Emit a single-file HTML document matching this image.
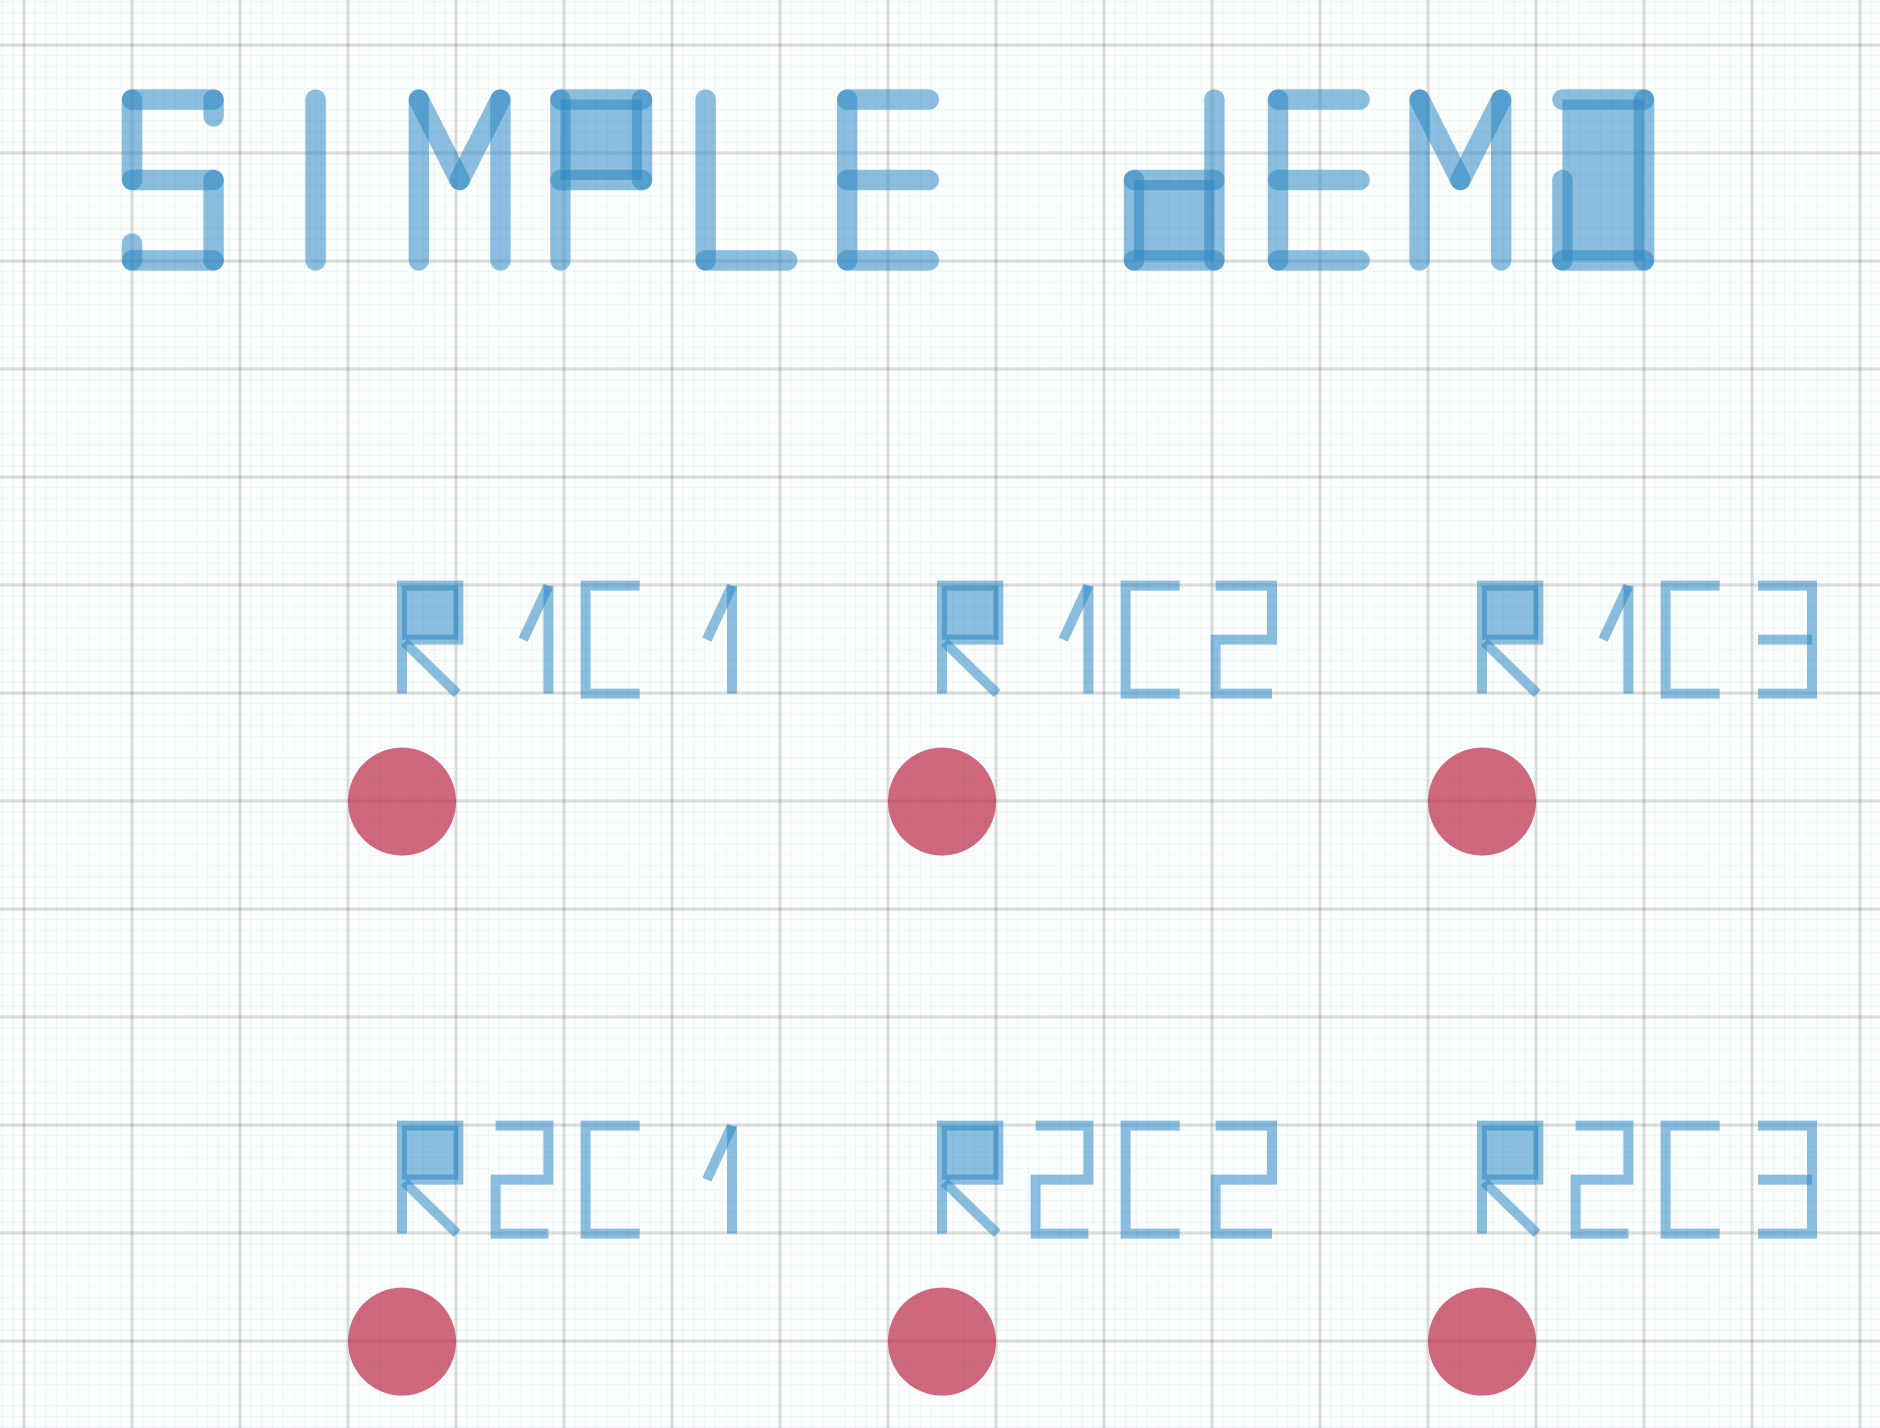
<!DOCTYPE html>
<html><head><meta charset="utf-8"><style>
html,body{margin:0;padding:0;background:#fcfefe;width:1880px;height:1428px;overflow:hidden}
.sr{position:absolute;left:-9999px;font-family:"Liberation Sans",sans-serif}
svg{display:block}
.t line,.t polyline{stroke:rgb(43,134,194);stroke-opacity:.55;stroke-width:17;stroke-linecap:round;fill:none}
.t rect{fill:rgb(43,134,194);fill-opacity:.55}
.s line,.s polyline{stroke:rgb(43,134,194);stroke-opacity:.55;stroke-width:8.3;fill:none;stroke-linejoin:miter}
.s rect{fill:rgb(43,134,194);fill-opacity:.55}
.d circle{fill:rgb(185,40,70);fill-opacity:.7}
</style></head><body>
<h1 class="sr">SIMPLE DEMO R1C1 R1C2 R1C3 R2C1 R2C2 R2C3</h1>
<svg width="1880" height="1428" viewBox="0 0 1566.67 1190" preserveAspectRatio="none">
<defs>
<pattern id="g" patternUnits="userSpaceOnUse" x="-25" y="-7.5" width="90" height="90">
<g stroke="rgb(110,170,180)" stroke-opacity=".1" stroke-width=".9">
<line x1="0" y1="0" x2="0" y2="90"/><line x1="9" y1="0" x2="9" y2="90"/><line x1="18" y1="0" x2="18" y2="90"/><line x1="27" y1="0" x2="27" y2="90"/><line x1="36" y1="0" x2="36" y2="90"/><line x1="54" y1="0" x2="54" y2="90"/><line x1="63" y1="0" x2="63" y2="90"/><line x1="72" y1="0" x2="72" y2="90"/><line x1="81" y1="0" x2="81" y2="90"/>
<line y1="0" x1="0" y2="0" x2="90"/><line y1="9" x1="0" y2="9" x2="90"/><line y1="18" x1="0" y2="18" x2="90"/><line y1="27" x1="0" y2="27" x2="90"/><line y1="36" x1="0" y2="36" x2="90"/><line y1="54" x1="0" y2="54" x2="90"/><line y1="63" x1="0" y2="63" x2="90"/><line y1="72" x1="0" y2="72" x2="90"/><line y1="81" x1="0" y2="81" x2="90"/>
</g>
<g stroke="#000" stroke-opacity=".13" stroke-width="2.6">
<line x1="45" y1="0" x2="45" y2="90"/><line x1="0" y1="45" x2="90" y2="45"/>
</g>
</pattern>
</defs>
<rect width="1566.67" height="1190" fill="url(#g)"/>

<g class="t">
<line x1="110" y1="83" x2="178" y2="83"/><line x1="178" y1="83" x2="178" y2="97"/>
<line x1="110" y1="83" x2="110" y2="150"/><line x1="110" y1="150" x2="178" y2="150"/>
<line x1="178" y1="150" x2="178" y2="217"/><line x1="110" y1="217" x2="178" y2="217"/>
<line x1="110" y1="203" x2="110" y2="217"/>
<line x1="263" y1="83" x2="263" y2="217"/>
<line x1="349" y1="83" x2="349" y2="217"/><line x1="417" y1="83" x2="417" y2="217"/>
<line x1="349" y1="83" x2="383" y2="150"/><line x1="383" y1="150" x2="417" y2="83"/>
<rect x="467" y="83" width="68" height="67"/>
<line x1="467" y1="83" x2="467" y2="217"/><line x1="467" y1="83" x2="535" y2="83"/>
<line x1="535" y1="83" x2="535" y2="150"/><line x1="467" y1="150" x2="535" y2="150"/>
<line x1="588" y1="83" x2="588" y2="217"/><line x1="588" y1="217" x2="656" y2="217"/>
<line x1="706" y1="83" x2="706" y2="217"/><line x1="706" y1="83" x2="774" y2="83"/>
<line x1="706" y1="150" x2="774" y2="150"/><line x1="706" y1="217" x2="774" y2="217"/>
<rect x="945" y="150" width="67" height="67"/>
<line x1="1012" y1="83" x2="1012" y2="217"/><line x1="945" y1="150" x2="1012" y2="150"/>
<line x1="945" y1="217" x2="1012" y2="217"/><line x1="945" y1="150" x2="945" y2="217"/>
<line x1="1065" y1="83" x2="1065" y2="217"/><line x1="1065" y1="83" x2="1133" y2="83"/>
<line x1="1065" y1="150" x2="1133" y2="150"/><line x1="1065" y1="217" x2="1133" y2="217"/>
<line x1="1183" y1="83" x2="1183" y2="217"/><line x1="1251" y1="83" x2="1251" y2="217"/>
<line x1="1183" y1="83" x2="1217" y2="150"/><line x1="1217" y1="150" x2="1251" y2="83"/>
<rect x="1302" y="83" width="68" height="134"/>
<line x1="1302" y1="83" x2="1370" y2="83"/><line x1="1370" y1="83" x2="1370" y2="217"/>
<line x1="1302" y1="217" x2="1370" y2="217"/><line x1="1302" y1="150" x2="1302" y2="217"/>
</g>

<g class="s">
<g transform="translate(335,488)"><rect x="0" y="0" width="47" height="45"/><polyline points="0,90 0,0 47,0 47,45 0,45"/><line x1="2" y1="47" x2="46" y2="90"/></g>
<g transform="translate(413,488)"><line x1="44" y1="0" x2="44" y2="90"/><line x1="44" y1="0" x2="23" y2="45"/></g>
<g transform="translate(488,488)"><polyline points="45,0 0,0 0,90 45,90"/></g>
<g transform="translate(566,488)"><line x1="44" y1="0" x2="44" y2="90"/><line x1="44" y1="0" x2="23" y2="45"/></g>

<g transform="translate(785,488)"><rect x="0" y="0" width="47" height="45"/><polyline points="0,90 0,0 47,0 47,45 0,45"/><line x1="2" y1="47" x2="46" y2="90"/></g>
<g transform="translate(863,488)"><line x1="44" y1="0" x2="44" y2="90"/><line x1="44" y1="0" x2="23" y2="45"/></g>
<g transform="translate(938,488)"><polyline points="45,0 0,0 0,90 45,90"/></g>
<g transform="translate(1013,488)"><polyline points="0,0 47,0 47,45 0,45 0,90 47,90"/></g>

<g transform="translate(1235,488)"><rect x="0" y="0" width="47" height="45"/><polyline points="0,90 0,0 47,0 47,45 0,45"/><line x1="2" y1="47" x2="46" y2="90"/></g>
<g transform="translate(1313,488)"><line x1="44" y1="0" x2="44" y2="90"/><line x1="44" y1="0" x2="23" y2="45"/></g>
<g transform="translate(1388,488)"><polyline points="45,0 0,0 0,90 45,90"/></g>
<g transform="translate(1465,488)"><polyline points="0,0 45,0 45,90 0,90"/><line x1="0" y1="45" x2="45" y2="45"/></g>

<g transform="translate(335,938)"><rect x="0" y="0" width="47" height="45"/><polyline points="0,90 0,0 47,0 47,45 0,45"/><line x1="2" y1="47" x2="46" y2="90"/></g>
<g transform="translate(413,938)"><polyline points="0,0 44,0 44,45 0,45 0,90 44,90"/></g>
<g transform="translate(488,938)"><polyline points="45,0 0,0 0,90 45,90"/></g>
<g transform="translate(566,938)"><line x1="44" y1="0" x2="44" y2="90"/><line x1="44" y1="0" x2="23" y2="45"/></g>

<g transform="translate(785,938)"><rect x="0" y="0" width="47" height="45"/><polyline points="0,90 0,0 47,0 47,45 0,45"/><line x1="2" y1="47" x2="46" y2="90"/></g>
<g transform="translate(863,938)"><polyline points="0,0 44,0 44,45 0,45 0,90 44,90"/></g>
<g transform="translate(938,938)"><polyline points="45,0 0,0 0,90 45,90"/></g>
<g transform="translate(1013,938)"><polyline points="0,0 47,0 47,45 0,45 0,90 47,90"/></g>

<g transform="translate(1235,938)"><rect x="0" y="0" width="47" height="45"/><polyline points="0,90 0,0 47,0 47,45 0,45"/><line x1="2" y1="47" x2="46" y2="90"/></g>
<g transform="translate(1313,938)"><polyline points="0,0 44,0 44,45 0,45 0,90 44,90"/></g>
<g transform="translate(1388,938)"><polyline points="45,0 0,0 0,90 45,90"/></g>
<g transform="translate(1465,938)"><polyline points="0,0 45,0 45,90 0,90"/><line x1="0" y1="45" x2="45" y2="45"/></g>
</g>

<g class="d">
<circle cx="335" cy="668" r="45"/><circle cx="785" cy="668" r="45"/><circle cx="1235" cy="668" r="45"/>
<circle cx="335" cy="1118" r="45"/><circle cx="785" cy="1118" r="45"/><circle cx="1235" cy="1118" r="45"/>
</g>
</svg>
</body></html>
